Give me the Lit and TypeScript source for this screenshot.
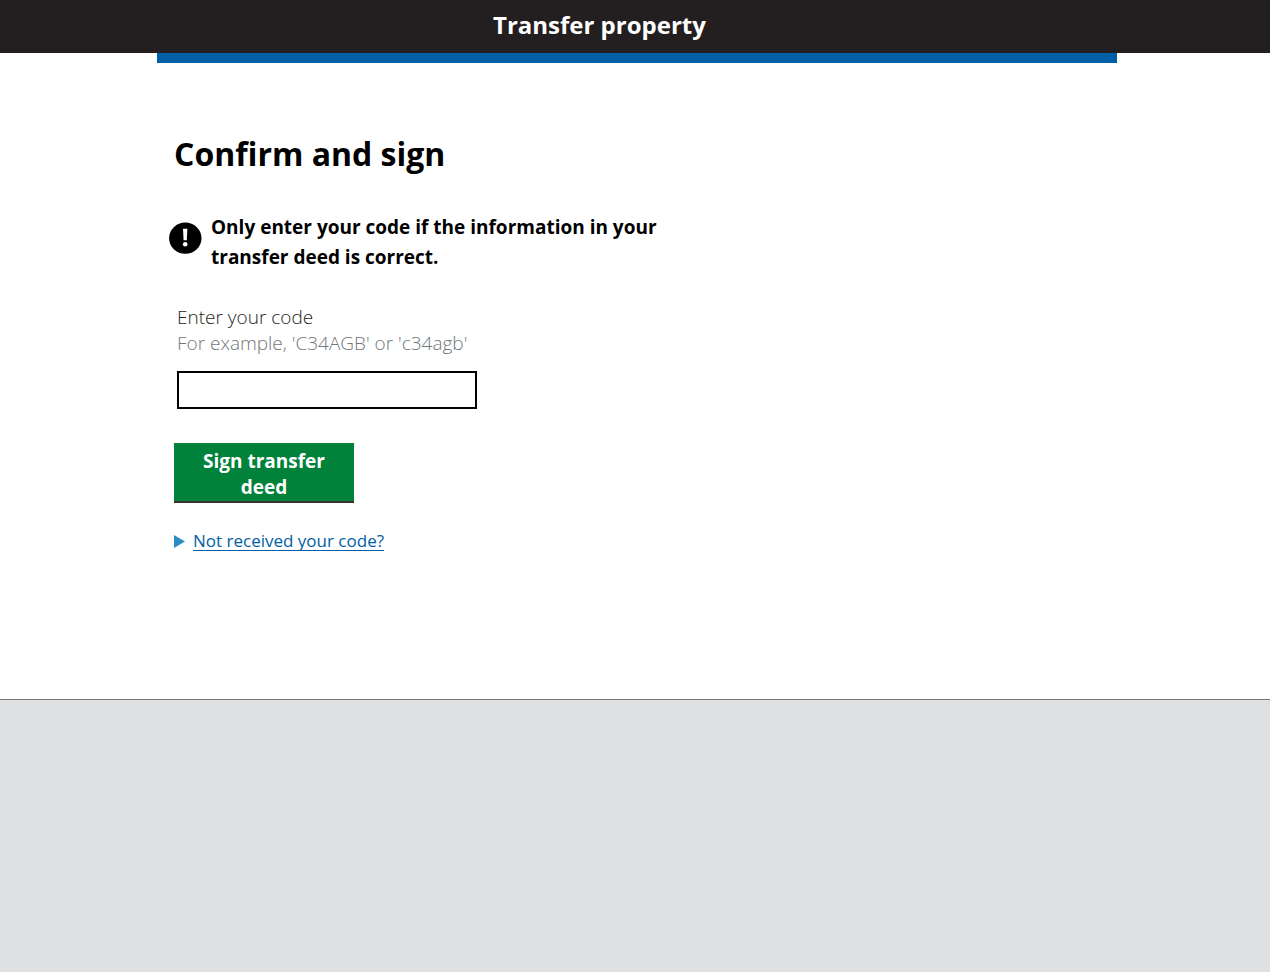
import { LitElement, html, css } from "lit";
import { customElement, state } from "lit/decorators.js";

@customElement("app-root")
export class AppRoot extends LitElement {
  static styles = css`
    :host {
      display: flex;
      flex-direction: column;
      min-height: 100vh;
      background: #dee0e2;
      color: #000;
      font-family: "Open Sans", "Noto Sans", sans-serif;
      font-size: 19px;
      line-height: 26px;
    }
    * {
      box-sizing: border-box;
    }
    .header {
      padding: 9px 0 12px 4px;
      background: #231f20;
      color: #fff;
    }
    .wrapper {
      max-width: 960px;
      margin: 0 auto;
    }
    .title {
      margin-left: 35%;
      font-size: 24px;
      line-height: 32px;
      font-weight: 700;
    }
    .page {
      padding: 0 0 145px 4px;
      background: #fff;
      border-bottom: 1px solid #757575;
    }
    .accent {
      height: 10px;
      background: #005ea5;
    }
    .content {
      padding: 67px 17px 0;
    }
    h1 {
      margin: 0;
      font-size: 32px;
      line-height: 48px;
      font-weight: 700;
    }
    .warning {
      display: flex;
      gap: 9px;
      margin: 34px 0 0 -5px;
      max-width: 500px;
      font-weight: 700;
      line-height: 30px;
    }
    .warning-icon {
      flex: none;
      width: 33px;
      height: 33px;
      margin-top: 10px;
    }
    .field {
      display: flex;
      flex-direction: column;
      align-items: flex-start;
      margin: 32px 0 0 3px;
      font-weight: 300;
    }
    .label {
      color: #231f20;
    }
    .hint {
      color: #6f777b;
    }
    .code {
      width: 300px;
      max-width: 100%;
      height: 38px;
      margin-top: 15px;
      padding: 4px 8px;
      border: 2px solid #000;
      border-radius: 0;
      background: #fff;
      font: inherit;
    }
    .submit {
      display: block;
      width: 180px;
      margin-top: 34px;
      padding: 5px 16px 1px;
      border: 0;
      border-bottom: 2px solid #333;
      background: #00823b;
      color: #fff;
      font: inherit;
      font-weight: 700;
      cursor: pointer;
    }
    .help {
      margin-top: 25px;
      font-size: 17px;
    }
    .summary {
      display: flex;
      align-items: center;
      gap: 8px;
      width: fit-content;
      color: #005ea5;
      list-style: none;
      cursor: pointer;
    }
    .summary-text {
      text-decoration: underline;
      text-underline-offset: 3px;
      text-decoration-skip-ink: none;
    }
    .arrow {
      width: 11px;
      height: 13px;
    }
    .help[open] .arrow {
      transform: rotate(90deg);
    }
  `;

  @state() private code = "";

  private submit(e: Event) {
    e.preventDefault();
  }

  render() {
    return html`
      <header class="header">
        <div class="wrapper">
          <div class="title">Transfer property</div>
        </div>
      </header>
      <main class="page">
        <div class="wrapper">
          <div class="accent"></div>
          <form class="content" @submit=${this.submit}>
            <h1>Confirm and sign</h1>
            <div class="warning">
              <svg class="warning-icon" viewBox="0 0 33 33" aria-hidden="true">
                <ellipse cx="16.3" cy="16.2" rx="16.2" ry="15.6" fill="#000" />
                <path d="M14 6.8h4.4l-.6 11.4h-3.2z" fill="#fff" />
                <circle cx="16.2" cy="22.2" r="2.3" fill="#fff" />
              </svg>
              <span>Only enter your code if the information in your transfer deed is correct.</span>
            </div>
            <div class="field">
              <label class="label" for="code">Enter your code</label>
              <span class="hint" id="hint">For example, 'C34AGB' or 'c34agb'</span>
              <input
                class="code"
                id="code"
                type="text"
                aria-describedby="hint"
                .value=${this.code}
                @input=${(e: Event) => (this.code = (e.target as HTMLInputElement).value)}
              />
            </div>
            <button class="submit" type="submit">Sign transfer deed</button>
            <details class="help">
              <summary class="summary">
                <svg class="arrow" viewBox="0 0 11 13" aria-hidden="true">
                  <path d="M0 0l11 6.5L0 13z" fill="#2b8cc4" />
                </svg>
                <span class="summary-text">Not received your code?</span>
              </summary>
            </details>
          </form>
        </div>
      </main>
    `;
  }
}
